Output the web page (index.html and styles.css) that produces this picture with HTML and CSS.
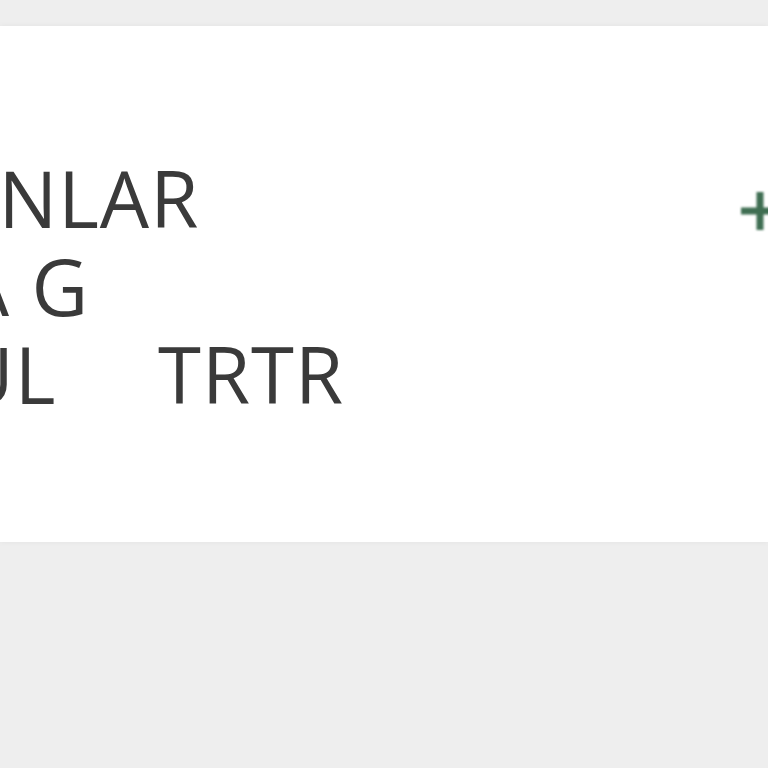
FILE: index.html
```html
<!DOCTYPE html>
<html>
<head>
<meta charset="utf-8">
<link rel="stylesheet" href="styles.css">
</head>
<body>
<div class="card">
  <div class="rows">
    <div class="cell">AKANLAR</div><div class="cell"></div>
    <div class="cell">ORA G</div><div class="cell"></div>
    <div class="cell">ADUL</div><div class="cell val">TRTR</div>
  </div>
  <div class="plus" aria-label="add">
    <svg width="44" height="44" viewBox="0 0 44 44"><path d="M22 3v38M3 22h38" stroke="#3f6e52" stroke-width="7" fill="none"/></svg>
  </div>
</div>
</body>
</html>
```
FILE: styles.css
```css
html, body { margin: 0; padding: 0; }
body {
  background: #eeeeee;
  width: 768px;
  height: 768px;
  overflow: hidden;
  padding-top: 26px;
  box-sizing: border-box;
}
.card {
  background: #ffffff;
  height: 516px;
  overflow: hidden;
  display: flex;
  justify-content: space-between;
  align-items: flex-start;
  box-shadow: 0 0 6px rgba(0,0,0,0.05);
}
.rows {
  padding-top: 128px;
  margin-left: -151px;
  display: grid;
  grid-template-columns: 309px auto;
  font-family: "Open Sans", sans-serif;
  font-weight: 400;
  font-size: 78px;
  line-height: 88px;
  letter-spacing: 1px;
  color: #3a3a3a;
  white-space: pre;
}
.cell { display: block; }
.plus {
  margin-top: 163px;
  margin-right: -14px;
  filter: blur(0.8px);
}
```
